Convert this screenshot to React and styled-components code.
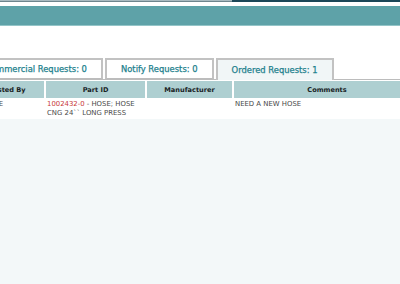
import React from 'react'
import styled, { createGlobalStyle } from 'styled-components'

const GlobalStyle = createGlobalStyle`
  html, body {
    margin: 0;
    padding: 0;
    background: #ffffff;
    overflow: hidden;
  }
  body {
    font-family: "DejaVu Sans", Verdana, sans-serif;
  }
`

const tabs = [
  { label: 'Commercial Requests: 0' },
  { label: 'Notify Requests: 0' },
  { label: 'Ordered Requests: 1', active: true },
]

const columns = ['Requested By', 'Part ID', 'Manufacturer', 'Comments']

const rows = [
  {
    requestedBy: 'SHANE',
    partNo: '1002432-0',
    partText: ' - HOSE; HOSE CNG 24`` LONG PRESS',
    manufacturer: '',
    comments: 'NEED A NEW HOSE',
  },
]

function App() {
  return (
    <Page>
      <GlobalStyle />
      <TopStrip>
        <StripLeft />
        <StripRight />
      </TopStrip>
      <Band />
      <Content>
        <TabList>
          {tabs.map((t) => (
            <Tab key={t.label} $active={t.active}>
              {t.label}
            </Tab>
          ))}
        </TabList>
        <Grid>
          {columns.map((c) => (
            <HeadCell key={c}>{c}</HeadCell>
          ))}
          {rows.map((r) => (
            <React.Fragment key={r.partNo}>
              <Cell $right>{r.requestedBy}</Cell>
              <Cell>
                <PartNo>{r.partNo}</PartNo>
                {r.partText}
              </Cell>
              <Cell>{r.manufacturer}</Cell>
              <Cell>{r.comments}</Cell>
            </React.Fragment>
          ))}
        </Grid>
      </Content>
      <Filler />
    </Page>
  )
}

export default App

const Page = styled.div`
  display: flex;
  flex-direction: column;
  width: 400px;
  height: 284px;
  overflow: hidden;
`

const TopStrip = styled.div`
  display: flex;
  height: 2px;
`

const StripLeft = styled.div`
  width: 232px;
  height: 1px;
  background: #a9bac0;
  border-bottom: 1px solid #6f858d;
`

const StripRight = styled.div`
  flex: 1;
  background: #1c4758;
`

const Band = styled.div`
  margin-top: 4px;
  height: 19px;
  background: #5ea2a8;
  border-bottom: 1px solid #94c5c8;
`

const Content = styled.div`
  margin-left: -44px;
  width: 464px;
  margin-top: 32px;
  background: #ffffff;
`

const TabList = styled.div`
  display: flex;
  gap: 2px;
  padding-left: 13px;
  height: 21px;
  border-bottom: 1px solid #bcbcbc;
  margin-bottom: 1px;
`

const Tab = styled.div`
  display: flex;
  align-items: center;
  box-sizing: border-box;
  padding: 0 14px;
  height: ${(p) => (p.$active ? '22px' : '21px')};
  border: 2px solid #c2c2c2;
  border-bottom: ${(p) => (p.$active ? 'none' : '1px solid #bcbcbc')};
  background: ${(p) => (p.$active ? '#f1f6f7' : '#ffffff')};
  color: #22818d;
  font-size: 8.4px;
  -webkit-text-stroke: 0.25px #22818d;
  white-space: nowrap;
`

const Grid = styled.div`
  display: grid;
  grid-template-columns: 88px 99px 85px 186px;
  column-gap: 2px;
`

const HeadCell = styled.div`
  height: 17px;
  display: flex;
  align-items: center;
  justify-content: center;
  background: #aecfd1;
  color: #182224;
  font-size: 6.6px;
  font-weight: bold;
  white-space: nowrap;
`

const Cell = styled.div`
  padding: 2px 1px 1px 1px;
  min-height: 18px;
  font-size: 6.9px;
  line-height: 9px;
  color: #4a4a4a;
  text-transform: uppercase;
  text-align: ${(p) => (p.$right ? 'right' : 'left')};
  padding-right: ${(p) => (p.$right ? '41px' : '1px')};
`

const PartNo = styled.span`
  color: #c83a3a;
`

const Filler = styled.div`
  flex: 1;
  background: #f3f8f9;
`
